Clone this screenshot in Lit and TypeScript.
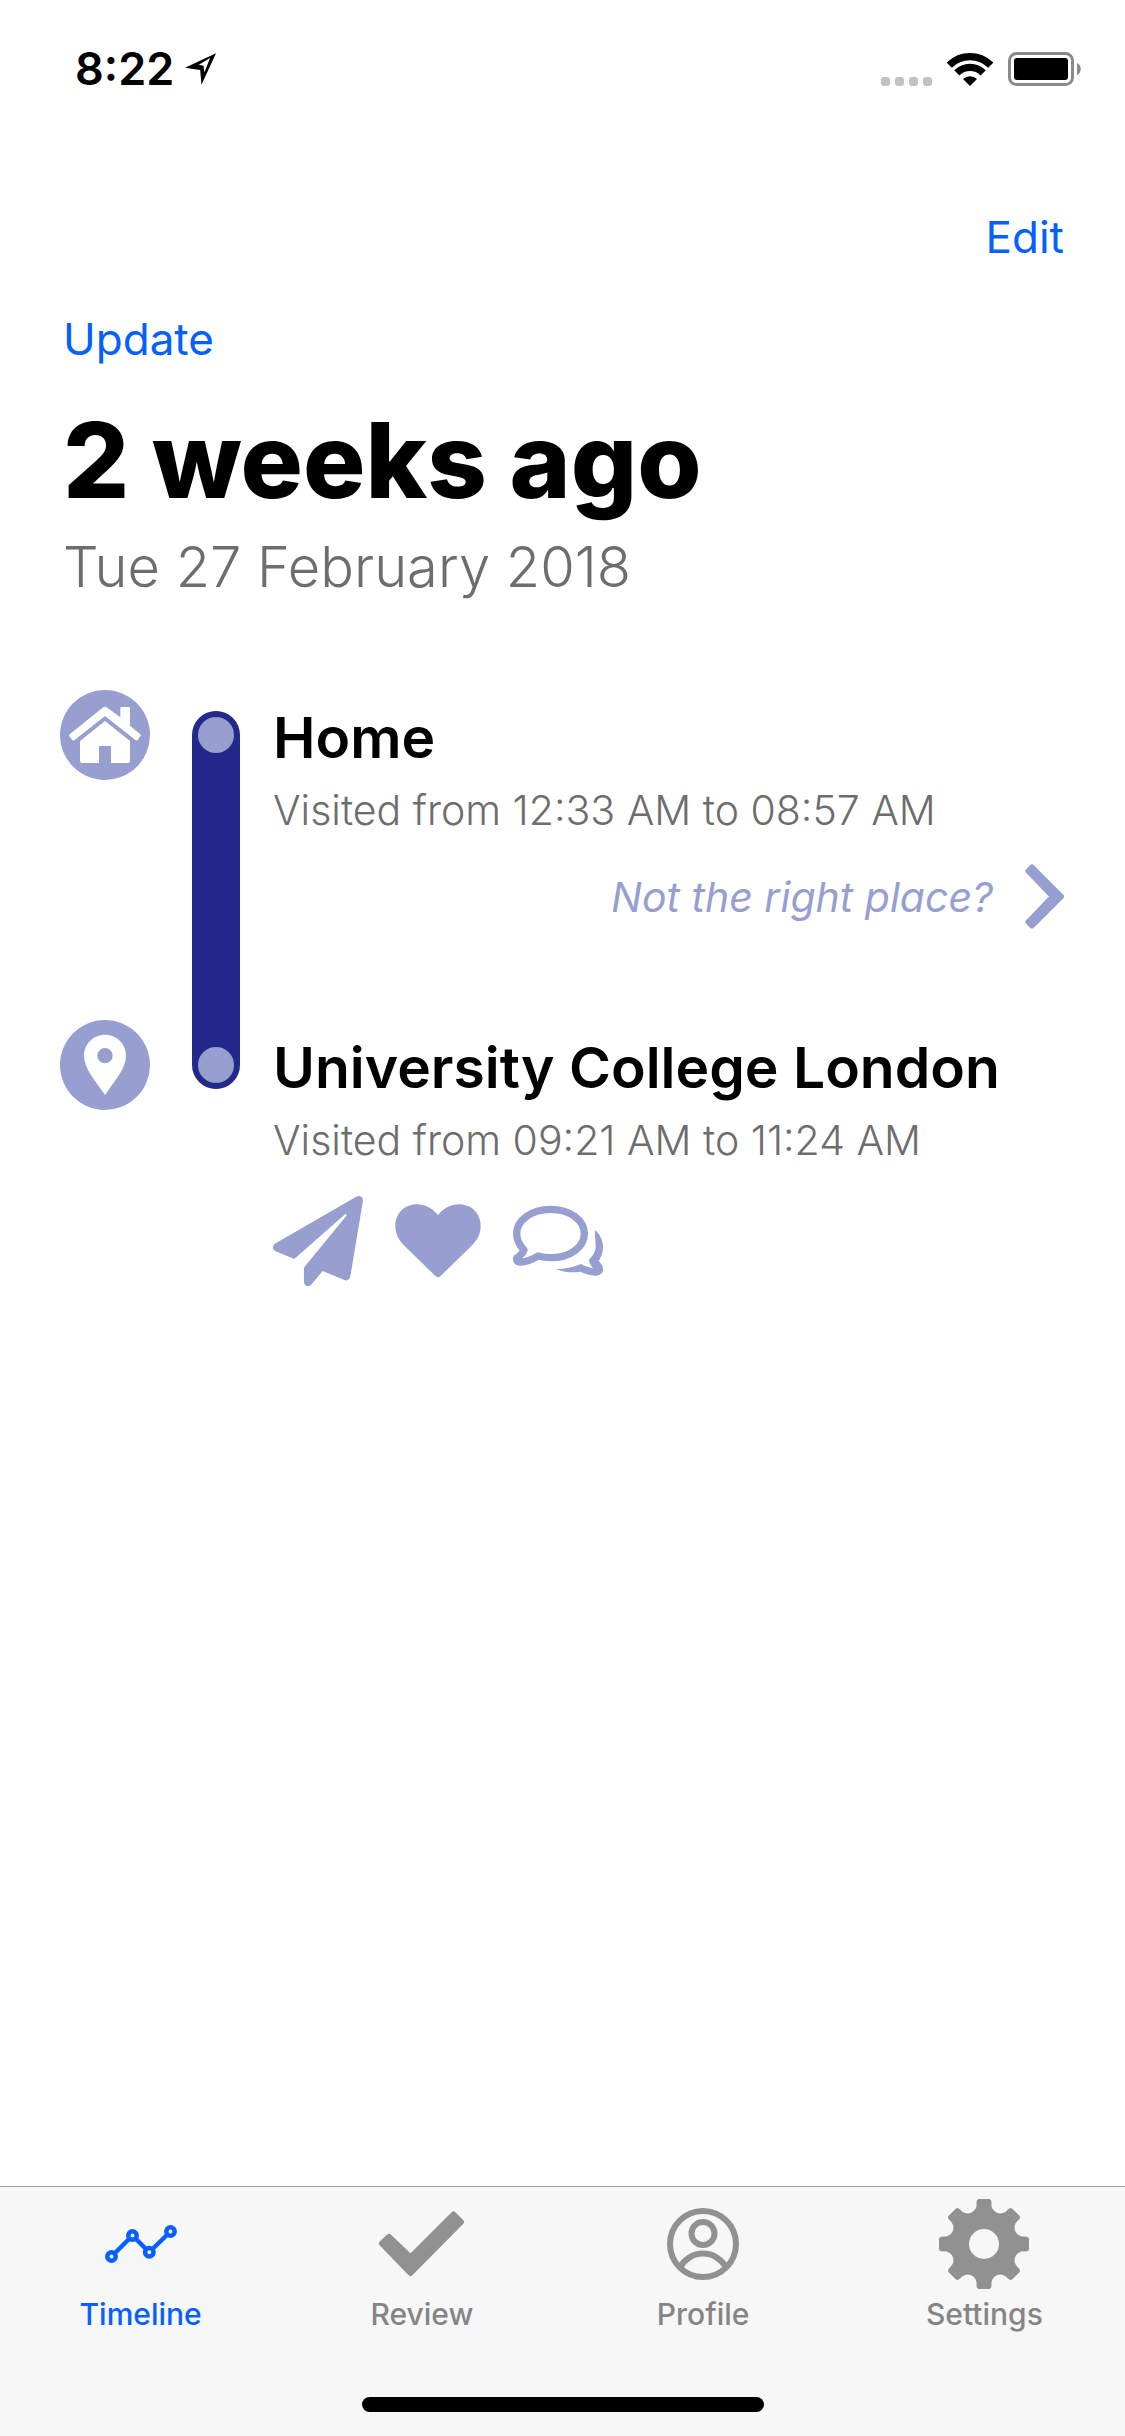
import { LitElement, html, css, svg } from "lit";
import { customElement, property, state } from "lit/decorators.js";
import { classMap } from "lit/directives/class-map.js";

/* ---------- icons ---------- */

const rotate = (x: number, y: number, turns: number): string => {
  const a = turns * Math.PI * 2;
  const rx = x * Math.cos(a) - y * Math.sin(a);
  const ry = x * Math.sin(a) + y * Math.cos(a);
  return `${rx.toFixed(2)} ${ry.toFixed(2)}`;
};

/* Eight rounded teeth joined by circular notches, around a round hole. */
const gearPath = (): string => {
  const parts: string[] = [];
  for (let i = 0; i < 8; i++) {
    const p = (x: number, y: number) => rotate(x, y, i / 8);
    parts.push(
      i === 0 ? `M${p(-7.5, -41)}` : `A9 9 0 0 0 ${p(-7.5, -41)}`,
      `Q${p(-7.5, -45)} ${p(-5, -45)}`,
      `L${p(5, -45)}`,
      `Q${p(7.5, -45)} ${p(7.5, -41)}`
    );
  }
  parts.push(`A9 9 0 0 0 ${rotate(-7.5, -41, 0)}Z`);
  parts.push("M15 0A15 15 0 1 0 -15 0A15 15 0 1 0 15 0Z");
  return parts.join("");
};

const icons = {
  locate: html`<svg width="31" height="32" viewBox="0 0 94 96" aria-hidden="true">
    <path fill="currentColor" fill-rule="evenodd" d="M0 44L94 0L50 96L46 51ZM42 35L56 38L59 58L76 15Z" />
  </svg>`,
  signal: html`<svg width="51" height="9" viewBox="0 0 51 9" aria-hidden="true">
    <g fill="#c2c2c2">
      ${[0, 14, 28, 42].map((x) => svg`<rect x=${x} width="9" height="9" rx="3" />`)}
    </g>
  </svg>`,
  wifi: html`<svg width="46" height="33" viewBox="0 0 138 99" aria-hidden="true">
    <g fill="none" stroke="currentColor" stroke-width="22">
      <path d="M6.800 36.800A88 88 0 0 1 131.200 36.800" />
      <path d="M29.400 59.400A56 56 0 0 1 108.600 59.400" />
    </g>
    <path fill="currentColor" d="M69 99L48 78A30 30 0 0 1 90 78Z" />
  </svg>`,
  battery: html`<svg width="74" height="34" viewBox="0 0 74 34" aria-hidden="true">
    <rect x="1.500" y="1.500" width="63" height="31" rx="7" fill="none" stroke="#8a8a8a" stroke-width="3" />
    <rect x="6" y="6" width="54" height="22" rx="3" fill="currentColor" />
    <path d="M69 11C74 13 74 21 69 23Z" fill="#8a8a8a" />
  </svg>`,
  home: html`<svg width="90" height="90" viewBox="0 0 270 270" aria-hidden="true">
    <circle cx="135" cy="135" r="135" fill="#979fd0" />
    <g fill="#fff">
      <path
        d="M128 53Q135 48 142 53L181 82V54Q181 51 184 51H207Q210 51 210 54V107L241 133Q244 136 241 139L233 150Q230 153 227 151L135 78L43 151Q40 153 37 150L28 139Q26 136 29 133Z"
      />
      <path
        d="M135 93L210 153V213Q210 219 204 219H153V172Q153 168 149 168H121Q117 168 117 172V219H66Q60 219 60 213V153Z"
      />
    </g>
  </svg>`,
  pin: html`<svg width="90" height="90" viewBox="0 0 270 270" aria-hidden="true">
    <circle cx="135" cy="135" r="135" fill="#979fd0" />
    <path
      fill="#fff"
      fill-rule="evenodd"
      d="M135 44C100 44 72 72 72 107C72 144 104 180 135 225C166 180 198 144 198 107C198 72 170 44 135 44ZM135 84A23 23 0 1 1 135 130A23 23 0 1 1 135 84Z"
    />
  </svg>`,
  chevron: html`<svg width="40" height="65" viewBox="0 0 40 65" aria-hidden="true">
    <path
      fill="currentColor"
      stroke="currentColor"
      stroke-width="6"
      stroke-linejoin="round"
      d="M7 3.500L36 32.500L7 61.500L3.500 58L28 32.500L3.500 7Z"
    />
  </svg>`,
  plane: html`<svg width="90" height="90" viewBox="0 0 512 512" aria-hidden="true">
    <path
      fill="currentColor"
      d="M476 3.2L12.5 270.6c-18.1 10.4-15.8 35.6 2.2 43.2L121 358.4l287.3-253.2c5.5-4.9 13.3 2.6 8.6 8.3L176 407v80.5c0 23.6 28.5 32.900 42.5 15.800L282 426l124.600 52.200c14.200 6 30.400-2.900 33-18.200l72-432C515 7.800 493.300-6.800 476 3.200z"
    />
  </svg>`,
  heart: html`<svg width="90" height="90" viewBox="0 0 270 270" aria-hidden="true">
    <path
      fill="currentColor"
      d="M135 58C120 38 97 25 72 25C34 25 7 53 7 90C7 113 17 132 32 147L128 241Q135 247 142 241L238 147C253 132 263 113 263 90C263 53 236 25 198 25C173 25 150 38 135 58Z"
    />
  </svg>`,
  comments: html`<svg width="90" height="90" viewBox="0 0 270 270" aria-hidden="true">
    <path
      fill="none"
      stroke="currentColor"
      stroke-width="22"
      stroke-linejoin="round"
      d="M33 162C19 147 11 131 11 113C11 73 55 40 113 40C171 40 214 73 214 113C214 153 171 185 113 185C99 185 87 183 75 180C56 192 37 199 19 198C9 196 9 186 15 183C24 177 30 170 33 162Z"
    />
    <path
      fill="currentColor"
      d="M247 102C262 117 270 134 270 152C270 168 265 182 257 195C267 204 271 213 270 223C268 235 258 240 246 239C231 238 217 234 202 227C177 231 152 229 129 219C155 219 180 214 204 204C216 210 226 214 240 217C233 208 229 200 227 192C240 180 248 167 248 151C248 134 244 119 247 102Z"
    />
  </svg>`,
  timeline: html`<svg width="72" height="38" viewBox="0 0 72 38" aria-hidden="true">
    <g fill="none" stroke="currentColor" stroke-width="4.500">
      <path d="M9.500 28.500L24.500 13.500M30.500 13.500L41 24M47.500 24L62.500 9.500" />
      <circle cx="6.500" cy="31.500" r="4.200" />
      <circle cx="27.500" cy="10.500" r="4.200" />
      <circle cx="44.300" cy="27.300" r="4.200" />
      <circle cx="65.500" cy="6.500" r="4.200" />
    </g>
  </svg>`,
  review: html`<svg width="87" height="66" viewBox="0 0 87 66" aria-hidden="true">
    <path
      fill="currentColor"
      stroke="currentColor"
      stroke-width="6"
      stroke-linejoin="round"
      d="M4 32.500L32.500 62L83 11L75.500 3.500L32.500 46.500L11 26Z"
    />
  </svg>`,
  profile: html`<svg width="72" height="72" viewBox="0 0 72 72" aria-hidden="true">
    <g fill="none" stroke="currentColor" stroke-width="6">
      <circle cx="36" cy="36" r="33" />
      <circle cx="36" cy="25.500" r="11.500" />
      <path d="M13 59.500A26 26 0 0 1 59 59.500" />
    </g>
  </svg>`,
  settings: html`<svg width="90" height="90" viewBox="-45 -45 90 90" aria-hidden="true">
    <path fill="currentColor" fill-rule="evenodd" d=${gearPath()} />
  </svg>`,
};

type IconName = keyof typeof icons;

/* ---------- status bar ---------- */

@customElement("status-bar")
export class StatusBar extends LitElement {
  @property() time = "";

  static styles = css`
    :host {
      display: flex;
      align-items: flex-end;
      justify-content: space-between;
      box-sizing: border-box;
      height: 90px;
      padding: 0 43px 0 75px;
      color: #000;
    }
    .side {
      display: flex;
      align-items: center;
      gap: 11px;
    }
    .indicators {
      align-items: flex-end;
      gap: 15px;
      padding-bottom: 4px;
    }
    .time {
      font-size: 45px;
      font-weight: 600;
      line-height: 42px;
    }
    svg {
      display: block;
    }
  `;

  render() {
    return html`
      <div class="side"><span class="time">${this.time}</span>${icons.locate}</div>
      <div class="side indicators">${icons.signal}${icons.wifi}${icons.battery}</div>
    `;
  }
}

/* ---------- timeline ---------- */

interface Visit {
  place: string;
  from: string;
  to: string;
  icon: IconName;
  confirmed: boolean;
}

@customElement("timeline-entry")
export class TimelineEntry extends LitElement {
  @property({ attribute: false }) visit!: Visit;
  @property({ type: Boolean }) last = false;

  static styles = css`
    :host {
      display: flex;
    }
    svg {
      display: block;
    }
    button {
      display: flex;
      align-items: center;
      padding: 0;
      border: 0;
      background: none;
      color: #979fd0;
      font: inherit;
      cursor: pointer;
    }
    .badge {
      flex: none;
      margin-right: 42px;
    }
    .rail {
      flex: none;
      display: flex;
      flex-direction: column;
      box-sizing: border-box;
      width: 48px;
      padding: 6px;
      margin-top: 21px;
      border-radius: 24px 24px 0 0;
      background: #23298a;
    }
    .rail.end {
      align-self: flex-start;
      height: 69px;
      margin-top: 0;
      justify-content: flex-end;
      border-radius: 0 0 24px 24px;
    }
    .dot {
      height: 36px;
      border-radius: 50%;
      background: #979fd0;
    }
    .content {
      flex: 1;
      min-width: 0;
      padding: 12px 0 91px 33px;
    }
    .place {
      margin: 0 0 12px;
      color: #000;
      font-size: 57px;
      font-weight: 600;
      line-height: 72px;
    }
    .times {
      margin: 0;
      color: #6d6d6d;
      font-size: 41px;
      font-weight: 300;
      line-height: 48px;
    }
    .question {
      gap: 32px;
      margin: 30px 0 0 auto;
      font-size: 41px;
      font-style: italic;
    }
    .reactions {
      display: flex;
      gap: 30px;
      margin-top: 32px;
    }
  `;

  render() {
    const v = this.visit;
    return html`
      <div class="badge">${icons[v.icon]}</div>
      <div class=${classMap({ rail: true, end: this.last })}><div class="dot"></div></div>
      <div class="content">
        <h2 class="place">${v.place}</h2>
        <p class="times">Visited from ${v.from} to ${v.to}</p>
        ${v.confirmed
          ? html`<div class="reactions">
              <button type="button" aria-label="Share">${icons.plane}</button>
              <button type="button" aria-label="Like">${icons.heart}</button>
              <button type="button" aria-label="Comment">${icons.comments}</button>
            </div>`
          : html`<button class="question" type="button">Not the right place?${icons.chevron}</button>`}
      </div>
    `;
  }
}

/* ---------- tab bar ---------- */

interface Tab {
  label: string;
  icon: IconName;
}

@customElement("tab-bar")
export class TabBar extends LitElement {
  @state() private current = "Timeline";

  private tabs: Tab[] = [
    { label: "Timeline", icon: "timeline" },
    { label: "Review", icon: "review" },
    { label: "Profile", icon: "profile" },
    { label: "Settings", icon: "settings" },
  ];

  static styles = css`
    :host {
      display: flex;
      flex-direction: column;
      align-items: center;
      padding: 12px 0 24px;
      border-top: 1px solid #a0a0a0;
      background: #f7f7f7;
    }
    .tabs {
      display: grid;
      grid-template-columns: repeat(4, 1fr);
      width: 100%;
      margin-bottom: 65px;
    }
    .tab {
      display: flex;
      flex-direction: column;
      align-items: center;
      gap: 7px;
      padding: 0;
      border: 0;
      background: none;
      color: #858585;
      font: inherit;
      font-size: 30px;
      font-weight: 500;
      line-height: 36px;
      cursor: pointer;
    }
    .icon {
      display: grid;
      place-items: center;
      height: 90px;
      color: #919191;
    }
    .tab.active,
    .tab.active .icon {
      color: #0660fe;
    }
    .indicator {
      width: 402px;
      max-width: 60%;
      height: 15px;
      border-radius: 8px;
      background: #000;
    }
  `;

  render() {
    return html`
      <nav class="tabs">
        ${this.tabs.map(
          (t) => html`<button
            type="button"
            class=${classMap({ tab: true, active: t.label === this.current })}
            @click=${() => (this.current = t.label)}
          >
            <span class="icon">${icons[t.icon]}</span>
            <span>${t.label}</span>
          </button>`
        )}
      </nav>
      <div class="indicator"></div>
    `;
  }
}

/* ---------- page ---------- */

@customElement("app-root")
export class AppRoot extends LitElement {
  private visits: Visit[] = [
    { place: "Home", from: "12:33 AM", to: "08:57 AM", icon: "home", confirmed: false },
    { place: "University College London", from: "09:21 AM", to: "11:24 AM", icon: "pin", confirmed: true },
  ];

  static styles = css`
    :host {
      display: flex;
      flex-direction: column;
      min-height: 100vh;
      background: #fff;
      font-family: Inter, "Liberation Sans", sans-serif;
    }
    .header {
      display: flex;
      flex-direction: column;
      align-items: flex-start;
      padding: 121px 61px 87px 63px;
    }
    .link {
      padding: 0;
      border: 0;
      background: none;
      color: #0660fe;
      font: inherit;
      font-size: 44px;
      line-height: 52px;
      cursor: pointer;
    }
    .edit {
      align-self: flex-end;
      margin-bottom: 50px;
    }
    .title {
      margin: 35px 0 11px;
      color: #000;
      font-size: 104px;
      font-weight: 800;
      line-height: 120px;
    }
    .date {
      margin: 0;
      color: #6d6d6d;
      font-size: 56px;
      font-weight: 300;
      line-height: 72px;
    }
    .list {
      flex: 1;
      padding: 0 60px;
    }
  `;

  render() {
    return html`
      <status-bar time="8:22"></status-bar>
      <header class="header">
        <button class="link edit" type="button">Edit</button>
        <button class="link" type="button">Update</button>
        <h1 class="title">2 weeks ago</h1>
        <p class="date">Tue 27 February 2018</p>
      </header>
      <main class="list">
        ${this.visits.map(
          (v, i) => html`<timeline-entry .visit=${v} ?last=${i === this.visits.length - 1}></timeline-entry>`
        )}
      </main>
      <tab-bar></tab-bar>
    `;
  }
}
